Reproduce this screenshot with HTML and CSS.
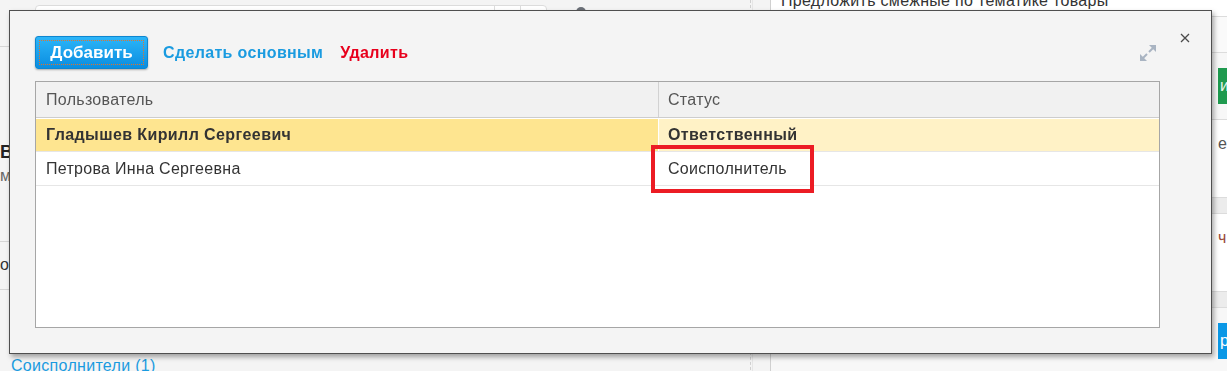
FILE: index.html
```html
<!DOCTYPE html>
<html lang="ru">
<head>
  <meta charset="UTF-8" />
  <meta name="viewport" content="width=device-width, initial-scale=1.0" />
  <title>Участники задачи</title>
  <link rel="stylesheet" href="styles.css">
</head>
<body>
  <div class="page">
    <main class="content">
      <div class="search-row">
        <div class="search-box">
          <span class="search-input"></span>
          <span class="search-btn"></span>
          <span class="search-btn"></span>
        </div>
        <span class="dome"></span>
      </div>

      <section class="block block-task">
        <h3 class="task-title">Выполнить задачу</h3>
        <p class="task-note">м</p>
      </section>

      <section class="block block-short">
        <p class="task-text">ов</p>
      </section>

      <a class="co-link" href="#">Соисполнители (1)</a>
    </main>

    <div class="splitter"></div>

    <aside class="side">
      <div class="side-row side-title"><span>Предложить смежные по тематике товары</span></div>
      <div class="side-row side-empty"></div>
      <div class="side-row side-actions"><span class="side-label"></span><span class="btn-green">ир</span></div>
      <div class="side-row side-text"><span class="side-label"></span><span>е</span></div>
      <div class="side-band"></div>
      <div class="side-row side-text side-text-red"><span class="side-label"></span><span>ч</span></div>
      <div class="side-band"></div>
      <div class="side-row side-actions"><span class="side-label"></span><span class="btn-blue">р,</span></div>
    </aside>
  </div>

  <div class="modal">
    <span class="modal-expand">
      <svg width="16" height="16" viewBox="0 0 16 16">
        <path d="M9 7 L13 3" stroke="#a9b4c2" stroke-width="2" fill="none"/>
        <path d="M16 0 L16 7 L9 0 Z" fill="#a9b4c2"/>
        <path d="M7 9 L3 13" stroke="#a9b4c2" stroke-width="2" fill="none"/>
        <path d="M0 16 L0 9 L7 16 Z" fill="#a9b4c2"/>
      </svg>
    </span>
    <span class="modal-close">
      <svg width="10" height="10" viewBox="0 0 10 10">
        <path d="M1 1 L9 9 M9 1 L1 9" stroke="#4a4a4a" stroke-width="1.3" fill="none"/>
      </svg>
    </span>

    <div class="toolbar">
      <button class="btn-add" type="button"><span>Добавить</span></button>
      <a class="tool-link" href="#">Сделать основным</a>
      <a class="tool-link tool-link-red" href="#">Удалить</a>
    </div>

    <div class="grid">
      <div class="grid-head">
        <div class="cell cell-user">Пользователь</div>
        <div class="cell cell-status">Статус</div>
      </div>
      <div class="grid-row grid-row-main">
        <div class="cell cell-user">Гладышев Кирилл Сергеевич</div>
        <div class="cell cell-status">Ответственный</div>
      </div>
      <div class="grid-row">
        <div class="cell cell-user">Петрова Инна Сергеевна</div>
        <div class="cell cell-status">Соисполнитель<span class="mark"></span></div>
      </div>
    </div>
  </div>
</body>
</html>
```

FILE: styles.css
```css
* {
  box-sizing: border-box;
}

html,
body {
  height: 100%;
}

body {
  margin: 0;
  font-family: 'Liberation Sans', Arial, sans-serif;
  font-size: 16px;
  letter-spacing: 0.3px;
  color: #333;
  background-color: #f4f4f4;
  overflow: hidden;
}

/* page behind the dialog */

.page {
  display: grid;
  grid-template-columns: 745px 13px 12px 1fr;
  height: 100%;
}

.content {
  grid-column: 1;
  display: flex;
  flex-direction: column;
}

.search-row {
  display: flex;
  align-items: flex-start;
  height: 47px;
  padding: 5px 0 0 35px;
  border-bottom: 1px solid #d6d6d6;
}

.search-box {
  display: flex;
  width: 512px;
  height: 34px;
  background-color: #fff;
  border: 1px solid #dcdcdc;
  border-radius: 4px;
}

.search-input {
  flex: 1;
}

.search-btn {
  width: 26px;
  border-left: 1px solid #dcdcdc;
}

.dome {
  width: 10px;
  height: 10px;
  margin: 2px 0 0 29px;
  border-radius: 50%;
  background-color: #6b7078;
}

.block {
  border-bottom: 1px solid #d6d6d6;
}

.block-task {
  height: 195px;
  padding-top: 95px;
}

.task-title {
  margin: 0;
  font-size: 18px;
  color: #222;
}

.task-note {
  margin: 4px 0 0;
  color: #666;
}

.block-short {
  height: 48px;
  padding-top: 14px;
}

.task-text {
  margin: 0;
}

.co-link {
  margin: 67px 0 0 11px;
  color: #1a9be0;
  text-decoration: none;
}

.splitter {
  grid-column: 2;
  margin: 0 5px;
  border-left: 1px dashed #d0d0d0;
  border-right: 1px solid #e6e6e6;
}

.side {
  grid-column: 4;
  display: flex;
  flex-direction: column;
  border-left: 1px solid #d0d0d0;
  overflow: hidden;
}

.side-row {
  display: flex;
  align-items: center;
  gap: 10px;
  padding-left: 10px;
  background-color: #fff;
  border-bottom: 1px solid #dcdcdc;
  white-space: nowrap;
}

.side-title {
  align-items: flex-start;
  height: 18px;
  line-height: 18px;
}

.side-title span {
  margin-top: -8px;
}

.side-empty {
  height: 37px;
  background-color: #fafafa;
}

.side-actions {
  height: 70px;
  background-color: #f7f7f7;
}

.side-label {
  flex: 0 0 427px;
}

.btn-green,
.btn-blue {
  padding: 0 14px 0 2px;
  line-height: 36px;
  color: #e8f5ec;
}

.btn-green {
  background-color: #1f9a4f;
}

.btn-blue {
  color: #fff;
  background-color: #0b98e6;
}

.side-text {
  height: 80px;
  padding-bottom: 28px;
  color: #555;
}

.side-text-red {
  color: #9a4b3a;
}

.side-band {
  height: 17px;
  background-color: #ececec;
  border-bottom: 1px solid #dcdcdc;
}

/* dialog */

.modal {
  position: fixed;
  left: 9px;
  top: 10px;
  width: 1203px;
  height: 344px;
  display: flex;
  flex-direction: column;
  padding: 25px 51px 25px 25px;
  background-color: #f4f4f4;
  border: 1px solid #4f4f4f;
  box-shadow: 2px 3px 5px rgba(0, 0, 0, 0.35);
}

.modal-close {
  position: absolute;
  top: 22px;
  right: 21px;
  display: flex;
  cursor: pointer;
}

.modal-expand {
  position: absolute;
  top: 34px;
  right: 55px;
  display: flex;
  cursor: pointer;
}

.toolbar {
  display: flex;
  align-items: center;
  gap: 15px;
  height: 33px;
  margin-bottom: 12px;
}

.btn-add {
  height: 33px;
  width: 113px;
  padding: 3px;
  font-family: inherit;
  font-size: 17px;
  font-weight: bold;
  letter-spacing: 0;
  color: #fff;
  background: linear-gradient(#2cb5f8, #0a8de0);
  border: 1px solid #0d86d0;
  border-radius: 3px;
  box-shadow: 0 1px 2px rgba(0, 0, 0, 0.3);
  cursor: pointer;
}

.btn-add span {
  display: flex;
  align-items: center;
  justify-content: center;
  height: 100%;
  border: 1px dotted #e2742c;
}

.tool-link {
  font-weight: bold;
  letter-spacing: 0.35px;
  color: #1a9be0;
  text-decoration: none;
}

.tool-link-red {
  margin-left: 2px;
  color: #e8001c;
}

.grid {
  flex: 1;
  background-color: #fff;
  border: 1px solid #a6a6a6;
}

.grid-head,
.grid-row {
  display: flex;
}

.grid-head {
  height: 36px;
  color: #555;
  background-color: #f1f1f1;
  border-bottom: 1px solid #cdcdcd;
}

.grid-row {
  height: 34px;
  border-top: 1px solid #fff;
  border-bottom: 1px solid #e6e6e6;
}

.cell {
  display: flex;
  align-items: center;
  padding-left: 10px;
}

.cell-user {
  width: 623px;
  border-right: 1px solid #fff;
}

.grid-head .cell-user {
  border-right-color: #d2d2d2;
}

.cell-status {
  position: relative;
  flex: 1;
  padding-left: 9px;
}

.grid-row-main {
  font-weight: bold;
  letter-spacing: 0.4px;
}

.grid-row-main .cell-user {
  background-color: #fee590;
}

.grid-row-main .cell-status {
  background-color: #fff2c6;
}

.mark {
  position: absolute;
  left: -8px;
  top: -8px;
  width: 163px;
  height: 48px;
  border: 4px solid #ec1c24;
}
```
